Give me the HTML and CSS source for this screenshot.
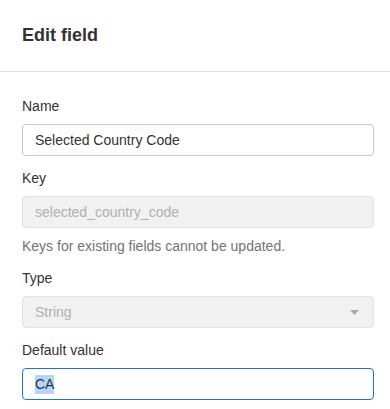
FILE: index.html
```html
<!DOCTYPE html>
<html lang="en">
<head>
    <meta charset="UTF-8">
    <meta name="viewport" content="width=device-width, initial-scale=1.0">
    <title>Edit field</title>
    <link rel="stylesheet" href="styles.css">
</head>
<body>
    <div class="panel">
        <div class="panel-header">
            <h1 class="panel-title">Edit field</h1>
        </div>
        <div class="panel-body">
            <div class="field">
                <div class="field-label">Name</div>
                <div class="text-input">Selected Country Code</div>
            </div>

            <div class="field">
                <div class="field-label">Key</div>
                <div class="text-input disabled">selected_country_code</div>
                <div class="field-help">Keys for existing fields cannot be updated.</div>
            </div>

            <div class="field">
                <div class="field-label">Type</div>
                <div class="text-input disabled select">
                    <span>String</span>
                    <svg class="caret" width="9" height="5" viewBox="0 0 9 5">
                        <path d="M0 0 L9 0 L4.5 5 Z" fill="#a8a8a8"/>
                    </svg>
                </div>
            </div>

            <div class="field">
                <div class="field-label">Default value</div>
                <div class="text-input focused"><span class="selected-text">CA</span></div>
            </div>
        </div>
    </div>
</body>
</html>
```

FILE: styles.css
```css
body {
    margin: 0;
    background-color: #fff;
    font-family: "Liberation Sans", Arial, sans-serif;
    color: #333;
}
.panel {
    width: 390px;
}
.panel-header {
    padding: 23px 22px 24px 22px;
    border-bottom: 1px solid #e2e2e2;
}
.panel-title {
    margin: 0;
    font-size: 18px;
    line-height: 24px;
    font-weight: bold;
    color: #333;
}
.panel-body {
    padding: 24px 16px 0 22px;
    display: flex;
    flex-direction: column;
    gap: 12px;
}
.field-label {
    font-size: 14px;
    line-height: 20px;
    color: #333;
    margin-bottom: 8px;
}
.text-input {
    box-sizing: border-box;
    height: 32px;
    padding: 0 12px;
    display: flex;
    align-items: center;
    border: 1px solid #c6c6c6;
    border-radius: 4px;
    font-size: 14px;
    color: #333;
    background-color: #fff;
}
.text-input.disabled {
    background-color: #f1f1f1;
    border-color: #e3e3e3;
    color: #b0b0b0;
}
.text-input.select {
    justify-content: space-between;
    padding-right: 14px;
}
.text-input.focused {
    border-color: #1e6fe6;
}
.selected-text {
    background-color: #b4d5fe;
    line-height: 19px;
}
.field-help {
    margin-top: 8px;
    font-size: 14px;
    line-height: 20px;
    color: #737373;
}
```
